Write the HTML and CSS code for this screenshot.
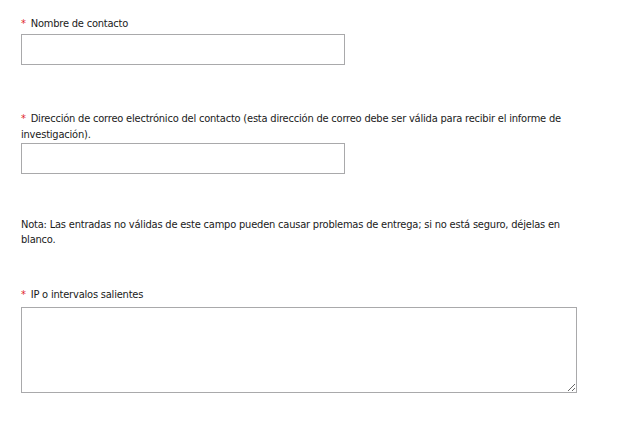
FILE: index.html
```html
<!DOCTYPE html>
<html lang="es">
<head>
    <meta charset="UTF-8">
    <meta name="viewport" content="width=device-width, initial-scale=1.0">
    <title>Contacto</title>
    <link rel="stylesheet" href="styles.css">
</head>
<body>
    <form class="contact-form">
        <div class="form-group">
            <label class="field-label" for="contactName"><span class="required">*</span> Nombre de contacto</label>
            <input class="text-input" type="text" id="contactName" name="contactName">
        </div>

        <div class="form-group form-group--email">
            <label class="field-label" for="contactEmail"><span class="required">*</span> Dirección de correo electrónico del contacto (esta dirección de correo debe ser válida para recibir el informe de investigación).</label>
            <input class="text-input" type="text" id="contactEmail" name="contactEmail">
        </div>

        <p class="form-note">Nota: Las entradas no válidas de este campo pueden causar problemas de entrega; si no está seguro, déjelas en blanco.</p>

        <div class="form-group form-group--ranges">
            <label class="field-label" for="outboundRanges"><span class="required">*</span> IP o intervalos salientes</label>
            <textarea class="text-area" id="outboundRanges" name="outboundRanges"></textarea>
        </div>
    </form>
</body>
</html>
```
FILE: styles.css
```css
body {
    font-family: "DejaVu Sans Condensed", "DejaVu Sans", sans-serif;
    font-size: 11px;
    letter-spacing: -0.2px;
    color: #1a1a1a;
    margin: 0;
    padding: 0;
    background-color: #fff;
}

.contact-form {
    width: 560px;
    padding: 16px 0 0 21px;
}

.form-group {
    margin: 0;
}

.field-label {
    display: block;
    line-height: 16px;
}

.required {
    color: #e0262b;
    margin-right: 2px;
}

.text-input {
    display: block;
    box-sizing: border-box;
    width: 324px;
    height: 31px;
    margin: 2px 0 0;
    border: 1px solid #a9a9ab;
    padding: 2px 4px;
    font: inherit;
}

.form-group--email {
    margin-top: 46px;
}

.form-group--email .text-input {
    margin-top: 0;
}

.form-note {
    margin: 43px 0 0;
    line-height: 15px;
}

.form-group--ranges {
    margin-top: 40px;
}

.text-area {
    display: block;
    box-sizing: border-box;
    width: 556px;
    height: 86px;
    margin: 4px 0 0;
    border: 1px solid #a9a9ab;
    padding: 2px 4px;
    font: inherit;
    resize: both;
}
```
